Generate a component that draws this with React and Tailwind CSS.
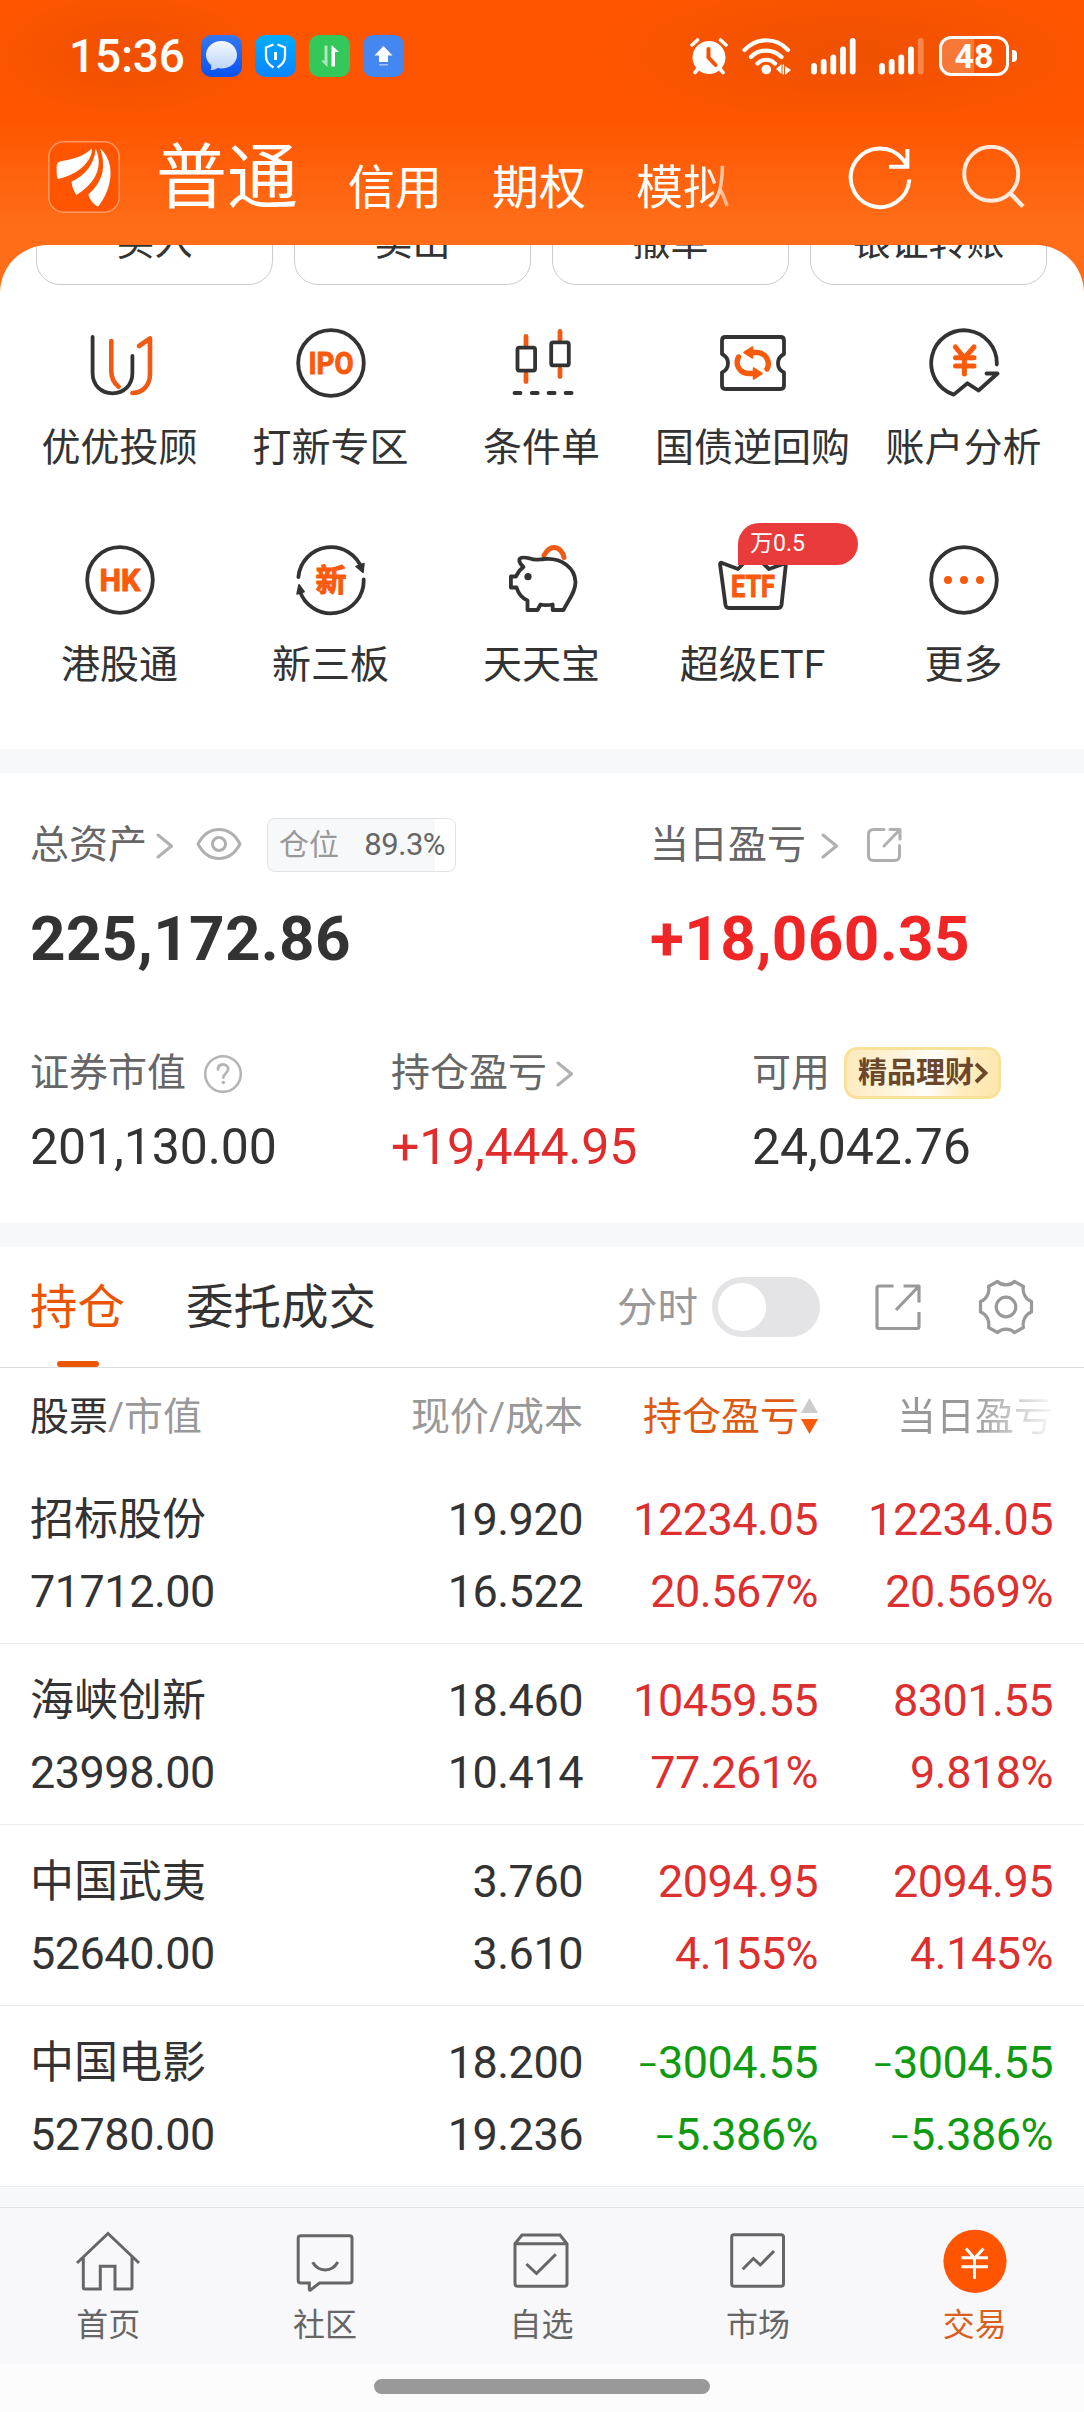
import { useState } from 'react';

const HOLDINGS = [
  { name: '招标股份', value: '71712.00', price: '19.920', cost: '16.522', total: '12234.05', totalPct: '20.567%', day: '12234.05', dayPct: '20.569%' },
  { name: '海峡创新', value: '23998.00', price: '18.460', cost: '10.414', total: '10459.55', totalPct: '77.261%', day: '8301.55', dayPct: '9.818%' },
  { name: '中国武夷', value: '52640.00', price: '3.760', cost: '3.610', total: '2094.95', totalPct: '4.155%', day: '2094.95', dayPct: '4.145%' },
  { name: '中国电影', value: '52780.00', price: '18.200', cost: '19.236', total: '-3004.55', totalPct: '-5.386%', day: '-3004.55', dayPct: '-5.386%' },
];

const GridIcon = ({ children }) => (
  <svg className="h-[72px] w-[72px] shrink-0" viewBox="0 0 72 72" fill="none" stroke="#333" strokeWidth="3.8" strokeLinecap="round" strokeLinejoin="round">
    {children}
  </svg>
);

const IconText = ({ y, width, size = 31, children }) => (
  <text x={36 - width / 2} y={y} textLength={width} lengthAdjust="spacingAndGlyphs" fontSize={size} fontWeight="700" fill="#f95a0c" stroke="#f95a0c" strokeWidth="1">
    {children}
  </text>
);

const SERVICES = [
  {
    label: '优优投顾',
    icon: (
      <GridIcon>
        <path d="M8.6 10V46C8.6 58 17 66.3 28.5 66.3S48.4 58 48.4 46V29" />
        <path stroke="#f05a14" strokeWidth="4.6" d="M27.3 14V44C27.3 51 30 56 34.6 59.7M55 19L66 11.5V47C66 58 59 66 48.4 66" />
      </GridIcon>
    ),
  },
  {
    label: '打新专区',
    icon: (
      <GridIcon>
        <circle cx="36" cy="36" r="32.8" />
        <IconText y={47} width={45}>IPO</IconText>
      </GridIcon>
    ),
  },
  {
    label: '条件单',
    icon: (
      <GridIcon>
        <path stroke="#f05a14" strokeWidth="4.8" d="M20 9.5V18M20 47V54.5M54 4.5V13M54 42V49.5" />
        <rect x="11.5" y="20.6" width="17.6" height="23" rx="2" />
        <rect x="45.2" y="15.4" width="17.6" height="23" rx="2" />
        <path d="M8.5 66H14.5M25.7 66H31.7M42.6 66H48.6M59.6 66H65.6" />
      </GridIcon>
    ),
  },
  {
    label: '国债逆回购',
    icon: (
      <GridIcon>
        <path d="M8.5 10H63.5Q67 10 67 13.5V27C59 31 59 41.5 67 45.5V58.5Q67 62 63.5 62H8.5Q5 62 5 58.5V45.5C13 41.5 13 31 5 27V13.5Q5 10 8.5 10Z" />
        <path stroke="#f95a0c" strokeWidth="5.4" d="M33 25.5H40C48 25.5 54 34 50 42M39 46.5H32C23 46.5 17.5 38 21.5 30" />
        <path fill="#f95a0c" stroke="#f95a0c" strokeWidth="1.5" d="M27 25.5L35.5 20V31ZM45 46.5L36.5 41V52Z" />
      </GridIcon>
    ),
  },
  {
    label: '账户分析',
    icon: (
      <GridIcon>
        <path d="M68.8 37.5A32.8 33 0 1 0 25.7 67.6L39.5 56.3L50.5 63.5L69.5 46.5H58.5" />
        <path stroke="#f95a0c" strokeWidth="5" d="M27.4 20L36.4 31L46 20M36.4 31V47M27.5 30.8H46M27.5 39H46" />
      </GridIcon>
    ),
  },
  {
    label: '港股通',
    icon: (
      <GridIcon>
        <circle cx="36" cy="36" r="32.8" />
        <IconText y={47} width={41}>HK</IconText>
      </GridIcon>
    ),
  },
  {
    label: '新三板',
    icon: (
      <GridIcon>
        <path d="M3.4 33A32.8 32.8 0 0 1 67 25M68.7 35.5A32.8 32.8 0 0 1 4.5 46" />
        <path fill="#333" strokeWidth="1.5" d="M61 22.5L69 19.5L68 28.5ZM2 50L9.2 47.7L4 40.7Z" />
        <IconText y={47} width={31}>新</IconText>
      </GridIcon>
    ),
  },
  {
    label: '天天宝',
    icon: (
      <GridIcon>
        <path stroke="#f05a14" strokeWidth="5" d="M38 11.5C41 6 44.5 3.5 48 3.5C53 3.5 57 8 58 13.5" />
        <path d="M17.5 23C13.5 19.5 12.5 16 14 14.5C16.5 12.5 20 13.5 24 14.5C29 16.5 32 15.5 38 15C56 13.5 69 24 69.5 38C69.5 49 62 56 57.5 66H46.7V60.5C42 61.3 38 61.3 34.5 60.5L31.5 66H21.5V56.5C17 54.5 12.5 50 10.5 43.5H4.9V32.5H10C11.5 29 14 25.5 17.5 23Z" />
        <circle cx="22" cy="32.7" r="3.6" fill="#333" stroke="none" />
      </GridIcon>
    ),
  },
  {
    label: '超级ETF',
    tag: '万0.5',
    icon: (
      <GridIcon>
        <path d="M5 19L21 25L36 10L52 25L69 19L64.5 61Q64 64 61 64H12Q9 64 8.5 61L3 20Q3.5 18 5 19Z" />
        <IconText y={53} width={44}>ETF</IconText>
      </GridIcon>
    ),
  },
  {
    label: '更多',
    icon: (
      <GridIcon>
        <circle cx="36" cy="36" r="32.8" />
        <g fill="#f95a0c" stroke="none">
          <circle cx="20" cy="36" r="4" />
          <circle cx="36" cy="36" r="4" />
          <circle cx="52" cy="36" r="4" />
        </g>
      </GridIcon>
    ),
  },
];

const NAV = [
  {
    label: '首页',
    icon: <path d="M2 35L33 5.5L64 35M8.3 29V59.5Q8.3 61 10 61H25.3V38.3H40V61H55.5Q57 61 57 59.5V29" />,
  },
  {
    label: '社区',
    icon: <path d="M9 7.7H57.5Q60 7.7 60 10V52.5Q60 55 57.5 55H27.5L18.5 62Q17.3 62.5 17.3 61V55H9Q6.2 55 6.2 52.5V10Q6.2 7.7 9 7.7ZM20.7 34.3C26.5 44.5 40 44.5 45.8 34" />,
  },
  {
    label: '自选',
    icon: <path d="M7 15.7L14 7H52L59 15.7V55.5Q59 58.2 56.5 58.2H9.5Q7 58.2 7 55.5ZM7 15.7H59M18.4 36L28.5 45.5L47.8 26.3" />,
  },
  {
    label: '市场',
    icon: <path d="M9 6.8H56Q58.5 6.8 58.5 9V55.7Q58.5 58.2 56 58.2H9Q6.7 58.2 6.7 55.7V9Q6.7 6.8 9 6.8ZM17.7 41.3L28.4 30.5L35.3 37L49 23" />,
  },
  {
    label: '交易',
    active: true,
    icon: (
      <>
        <circle cx="33" cy="33.3" r="31.6" fill="#ff5500" stroke="none" />
        <path stroke="#fff" d="M24 20.5L32.5 30.3L41.5 20.5M32.5 30V51M19.4 29.8H46M19.4 38.8H46" />
      </>
    ),
  },
];

const Chevron = ({ className }) => (
  <svg className={`h-[26px] w-[18px] shrink-0 ${className}`} viewBox="0 0 18 26" fill="none" stroke="#b0b0b0" strokeWidth="3" strokeLinecap="round" strokeLinejoin="round">
    <path d="M2 2L15.5 13L2 24" />
  </svg>
);

function StatusBar() {
  return (
    <div className="flex h-[112px] items-center bg-[radial-gradient(ellipse_150px_70px_at_127px_54px,rgba(120,50,0,0.13),transparent),radial-gradient(ellipse_260px_80px_at_850px_54px,rgba(120,50,0,0.13),transparent)] pl-[69px] text-white">
      <span className="w-[132px] text-[46px] font-medium leading-[60px] tracking-[-0.2px]">15:36</span>
      <div className="flex gap-[13px]">
        <svg className="h-[42px] w-[41px]" viewBox="0 0 41 42">
          <defs>
            <linearGradient id="msg" x1="0" y1="0" x2="0" y2="1">
              <stop offset="0" stopColor="#3578f0" />
              <stop offset="1" stopColor="#0a52f0" />
            </linearGradient>
            <linearGradient id="bubble" x1="0" y1="0" x2="0" y2="1">
              <stop offset="0" stopColor="#f4f9ff" />
              <stop offset="1" stopColor="#bcd3fb" />
            </linearGradient>
          </defs>
          <rect width="41" height="42" rx="10" fill="url(#msg)" />
          <path fill="url(#bubble)" d="M20.5 6C29 6 36 12 36 20S29 33.5 20.5 33.5C19 33.5 17.5 33.3 16.5 33C14.5 34.5 12.5 35 9.5 35C10.5 33.5 10.5 32 10 30C7 27.5 5 24 5 20C5 12 12 6 20.5 6Z" />
        </svg>
        <svg className="h-[42px] w-[41px]" viewBox="0 0 41 42" fill="none" stroke="#fff" strokeWidth="2.2">
          <defs>
            <linearGradient id="guard" x1="0" y1="0" x2="0" y2="1">
              <stop offset="0" stopColor="#00adff" />
              <stop offset="1" stopColor="#0a84ff" />
            </linearGradient>
          </defs>
          <rect width="41" height="42" rx="10" fill="url(#guard)" stroke="none" />
          <path d="M18.5 9.5L11 12.5V21C11 26.5 14 30 18.5 32.5M22.5 9.5L30 12.5V21C30 26.5 27 30 22.5 32.5" />
          <path strokeWidth="3" d="M20.5 17V25" />
        </svg>
        <svg className="h-[42px] w-[41px]" viewBox="0 0 41 42">
          <rect width="41" height="42" rx="10" fill="#34c759" />
          <path fill="#fff" opacity=".6" d="M15.5 10.5H18.5V32L12 25.5H15.5Z" />
          <path fill="#fff" d="M22.5 10L30 17H26V31.5H22.5Z" />
        </svg>
        <svg className="h-[42px] w-[41px]" viewBox="0 0 41 42">
          <rect width="41" height="42" rx="10" fill="#4487f0" />
          <path fill="#fff" d="M20.5 11L29.5 20.5H25V27H16V20.5H11.5Z" />
          <path fill="#fff" opacity=".5" d="M16 29H25V30.5H16Z" />
        </svg>
      </div>
      <div className="ml-[285px] flex items-center">
        <svg className="h-[38px] w-[40px]" viewBox="0 0 40 38" fill="none" stroke="#fff" strokeLinecap="round">
          <circle cx="20" cy="20.5" r="16.5" fill="#fff" stroke="none" />
          <path strokeWidth="3.6" d="M3 8L8.5 3M37 8L31.5 3M6 35.5L9 32M34 35.5L31 32" />
          <path stroke="#f55200" strokeWidth="4" strokeLinejoin="round" d="M19.5 12V20.5L26.5 28" />
        </svg>
        <svg className="ml-[13px] h-[38px] w-[50px]" viewBox="0 0 50 38" fill="none" stroke="#fff" strokeWidth="4.2" strokeLinecap="round">
          <path d="M2.5 13C14.5 0 34 0 46 13M9 20C17 11.5 31 11.5 39.5 20M15.5 26.5C20.5 21.5 28 21.5 33 26.5" />
          <circle cx="24.3" cy="32.5" r="4.8" fill="#fff" stroke="none" />
          <path fill="#fff" stroke="none" d="M34 32L39.5 27V37ZM49 33L43 38V29Z" />
          <path strokeWidth="1.5" d="M41.3 28V37" />
        </svg>
        <svg className="ml-[18px] h-[38px] w-[48px]" viewBox="0 0 48 38" fill="none" stroke="#fff" strokeWidth="5.8" strokeLinecap="round">
          <path d="M4 29V34.5M13.7 25V34.5M23.3 20.5V34.5M33 12.5V34.5M42.7 4V34.5" />
        </svg>
        <svg className="ml-[20px] h-[38px] w-[48px]" viewBox="0 0 48 38" fill="none" stroke="#fff" strokeWidth="5.8" strokeLinecap="round">
          <path d="M4 29V34.5M13.7 25V34.5M23.3 20.5V34.5M33 12.5V34.5" />
          <path opacity=".3" d="M42.7 4V34.5" />
        </svg>
        <div className="ml-[13px] flex h-[40px] w-[70px] items-center justify-center rounded-[12px] border-[3px] border-white bg-[linear-gradient(90deg,rgba(255,255,255,0.22)_50%,transparent_50%)] text-[34px] font-bold leading-none">48</div>
        <div className="ml-[3px] h-[12px] w-[5px] rounded-r-[4px] bg-white" />
      </div>
    </div>
  );
}

function Header() {
  return (
    <div className="h-[245px]">
      <StatusBar />
      <div className="flex h-[133px] items-start text-white">
        <svg className="ml-[48px] mt-[29px] h-[72px] w-[72px]" viewBox="0 0 72 72">
          <rect x=".8" y=".8" width="70.4" height="70.4" rx="15" fill="#ff5500" stroke="#ff9a66" strokeWidth="1.5" />
          <g fill="#fff">
            <path d="M8.7 25C9 21.5 11 20.5 14 20C26 18.5 37 14 44 7.5C44.5 20 30 34 9.6 38C8.5 34 8.5 29 8.7 25Z" />
            <path d="M47.6 7.5C47 22 38 34 23.4 40.7C24 46 26 50 28.2 54C44 45 57 28 47.6 7.5Z" />
            <path d="M52 7.5C60 14 63 24 62.5 34C62 46 57 57 50 65.7C45 63 42 59 40.3 53.5C54 42 59 26 52 7.5Z" />
          </g>
        </svg>
        <span className="ml-[36px] mt-[14px] text-[71px] leading-[104px]">普通</span>
        <div className="ml-[50px] mt-[41px] flex w-[421px] gap-[50px] text-[47px] leading-[70px]">
          <span>信用</span>
          <span>期权</span>
          <span className="bg-[linear-gradient(90deg,#fff_76%,#ff9a60_102%)] bg-clip-text text-transparent">模拟</span>
        </div>
        <svg className="ml-[78px] mt-[33px] h-[66px] w-[66px]" viewBox="0 0 66 66" fill="none" stroke="#fff" strokeWidth="4">
          <path d="M62.3 34.5A29.3 29.3 0 1 1 56 14.5L61 22M42 21.7H60.4V4" />
        </svg>
        <svg className="ml-[46px] mt-[33px] h-[66px] w-[66px]" viewBox="0 0 66 66" fill="none" stroke="#ffeade" strokeWidth="4">
          <circle cx="32.2" cy="28.8" r="27" />
          <path strokeWidth="4.5" d="M50.5 47.5L64 61.5" />
        </svg>
      </div>
    </div>
  );
}

function Services() {
  return (
    <>
      <div className="flex h-[40px] items-end gap-[21px] overflow-hidden px-[36px]">
        {['买入', '卖出', '撤单', '银证转账'].map((label) => (
          <div key={label} className="flex h-[92px] w-[237px] shrink-0 items-center justify-center rounded-[24px] border border-[#ccc] pt-[6px] text-[38px]">
            {label}
          </div>
        ))}
      </div>
      <div className="grid h-[464px] grid-cols-5 content-start pl-[14px] pr-[15px] pt-[42px]">
        {SERVICES.map((item) => (
          <div key={item.label} className="relative flex h-[217px] flex-col items-center">
            {item.icon}
            {item.tag && (
              <span className="absolute left-[91px] top-[-21px] h-[42px] w-[120px] rounded-[21px] rounded-bl-none bg-[#ea3b3c] pl-[12px] text-[23px] leading-[42px] text-white">
                {item.tag}
              </span>
            )}
            <span className="mt-[21px] whitespace-nowrap text-[39px] leading-[56px]">{item.label}</span>
          </div>
        ))}
      </div>
    </>
  );
}

function Assets() {
  return (
    <div className="h-[450px] text-[39px] leading-[56px] text-[#666]">
      <div className="flex pl-[30px] pt-[44px]">
        <div className="w-[620px]">
          <div className="flex h-[56px] items-center">
            总资产
            <Chevron className="ml-[9px] mt-[1px]" />
            <svg className="mb-[2px] ml-[22px] h-[34px] w-[46px]" viewBox="0 0 46 34" fill="none" stroke="#b0b0b0" strokeWidth="3">
              <path strokeLinejoin="round" d="M2 17C7 7.5 14 2.5 23 2.5S39 7.5 44 17C39 26.5 32 31.5 23 31.5S7 26.5 2 17Z" />
              <circle cx="23" cy="17" r="6.5" />
            </svg>
            <div className="ml-[25px] flex h-[54px] w-[189px] items-center justify-between overflow-hidden rounded-[8px] border border-[#e2e2e4] bg-[linear-gradient(90deg,#f7f8fa_89.3%,#fff_89.3%)] pl-[11px] pr-[10px] text-[30px]">
              <span className="text-[#999]">仓位</span>
              <span className="text-[31px] tracking-[-0.5px]">89.3%</span>
            </div>
          </div>
          <div className="mt-[30px] text-[62px] font-bold leading-[72px] tracking-[0.3px] text-[#333]">225,172.86</div>
        </div>
        <div>
          <div className="flex h-[56px] items-center">
            当日盈亏
            <Chevron className="ml-[15px] mt-[1px]" />
            <svg className="ml-[27px] h-[36px] w-[36px]" viewBox="0 0 36 36" fill="none" stroke="#b0b0b0" strokeWidth="3" strokeLinecap="round" strokeLinejoin="round">
              <path d="M18 2.5H7.5Q2.5 2.5 2.5 7.5V28.5Q2.5 33.5 7.5 33.5H28.5Q33.5 33.5 33.5 28.5V18.5M24 2.5H34V12M34 2.5L18 19" />
            </svg>
          </div>
          <div className="mt-[30px] text-[62px] font-bold leading-[72px] tracking-[0.4px] text-[#f02626]">+18,060.35</div>
        </div>
      </div>
      <div className="flex pl-[30px] pt-[70px]">
        <div className="w-[361px]">
          <div className="flex h-[56px] items-center">
            证券市值
            <svg className="ml-[17px] mt-[1px] h-[40px] w-[40px]" viewBox="0 0 40 40" fill="none" stroke="#b5b5b5" strokeWidth="2.6" strokeLinecap="round">
              <circle cx="20" cy="20" r="17.8" />
              <path strokeWidth="2.8" d="M15 15.5C15 12 17.3 10.5 20 10.5S25.2 12.3 25.2 15.3C25.2 18.5 20.5 19.5 20.3 23.5" />
              <circle cx="20.3" cy="28.5" r="1.8" fill="#b5b5b5" stroke="none" />
            </svg>
          </div>
          <div className="mt-[16px] text-[50px] leading-[60px] tracking-[-0.1px] text-[#333]">201,130.00</div>
        </div>
        <div className="w-[361px]">
          <div className="flex h-[56px] items-center">
            持仓盈亏
            <Chevron className="ml-[9px] mt-[1px]" />
          </div>
          <div className="mt-[16px] text-[50px] leading-[60px] tracking-[-0.2px] text-[#e02c2c]">+19,444.95</div>
        </div>
        <div>
          <div className="flex h-[56px] items-center">
            可用
            <div className="ml-[14px] flex h-[52px] w-[157px] items-center rounded-[13px] border-[3px] border-[#f8e29a] bg-[linear-gradient(105deg,#fdebc0_5%,#fef3d8_30%,#fffefa_55%,#feecbd_78%,#fde6ae)] pl-[11px] text-[29px] font-bold text-[#6b482c]">
              精品理财
              <svg className="h-[22px] w-[15px]" viewBox="0 0 15 22" fill="none" stroke="#6b482c" strokeWidth="3.8">
                <path d="M2 2L11.5 11L2 20" />
              </svg>
            </div>
          </div>
          <div className="mt-[16px] text-[50px] leading-[60px] tracking-[-0.1px] text-[#333]">24,042.76</div>
        </div>
      </div>
    </div>
  );
}

function HoldingTabs() {
  const [timeline, setTimeline] = useState(false);

  return (
    <div className="flex h-[121px] items-center border-b border-[#dedede] pl-[30px] text-[47.5px] leading-[68px]">
      <div className="flex h-[120px] w-[95px] flex-col items-center justify-between text-[#ea5504]">
        <span className="pt-[27px]">持仓</span>
        <span className="h-[6px] w-[42px] rounded-full bg-[#ea5504]" />
      </div>
      <span className="ml-[61px] w-[431px] pt-[2px]">委托成交</span>
      <span className="pt-[2px] text-[40.5px] text-[#999]">分时</span>
      <button
        onClick={() => setTimeline(!timeline)}
        className={`ml-[14px] flex h-[60px] w-[108px] items-center rounded-full px-[6px] ${timeline ? 'justify-end bg-[#ea5504]' : 'bg-[#e4e4e6]'}`}
      >
        <span className="h-[48px] w-[48px] rounded-full bg-white" />
      </button>
      <svg className="ml-[54px] h-[48px] w-[48px]" viewBox="0 0 48 48" fill="none" stroke="#999" strokeWidth="3.2" strokeLinejoin="round">
        <path d="M19.5 3H5Q3 3 3 5V43.5Q3 45.5 5 45.5H43Q45 45.5 45 43.5V29M29.5 3H45V19.5M45 3L22 27" />
      </svg>
      <svg className="ml-[56px] h-[56px] w-[56px]" viewBox="0 0 56 56" fill="none" stroke="#999" strokeWidth="3.2" strokeLinejoin="round">
        <path d="M19.5 2.5C24 7 32 7 36.5 2.5L45.5 7.5C44 13.5 47.5 20.5 53.5 22.5V33C47.5 35 44 42 45.5 48.5L36.5 53.5C32 49 24 49 19.5 53.5L10.5 48.5C12 42 8.5 35 2.5 33V22.5C8.5 20.5 12 13.5 10.5 7.5Z" />
        <circle cx="28" cy="28" r="9.8" />
      </svg>
    </div>
  );
}

// short dash in front of losses, lighter than the font's own minus sign
function Amount({ value }) {
  if (!value.startsWith('-')) return <div className="h-[72px]">{value}</div>;
  return (
    <div className="h-[72px]">
      <span className="text-[37px] leading-none">−</span>
      {value.slice(1)}
    </div>
  );
}

function Cell({ top, bottom, className = '' }) {
  return (
    <div className={`text-right ${className}`}>
      <Amount value={top} />
      <Amount value={bottom} />
    </div>
  );
}

function HoldingTable() {
  const getColor = (value) => (value.startsWith('-') ? 'text-[#0f9a12]' : 'text-[#dc2f2f]');

  return (
    <div>
      <div className="grid h-[95px] grid-cols-[301px_252px_235px_235px] items-center pl-[30px] pt-[3px] text-[39px] leading-[56px] text-[#999]">
        <div>
          <span className="text-[#333]">股票</span>/市值
        </div>
        <div className="text-right">现价/成本</div>
        <div className="flex items-center justify-end text-[#dd5a14]">
          持仓盈亏
          <svg className="mb-[2px] ml-[2px] h-[36px] w-[17px]" viewBox="0 0 17 36">
            <path fill="#ccc" d="M8.5 0L17 15H0Z" />
            <path fill="#f95a0c" d="M8.5 36L17 21H0Z" />
          </svg>
        </div>
        <div className="text-right">
          <span className="bg-[linear-gradient(90deg,#999_48%,#fff_104%)] bg-clip-text text-transparent">当日盈亏</span>
        </div>
      </div>
      {HOLDINGS.map((row) => (
        <div key={row.name} className="grid h-[181px] grid-cols-[301px_252px_235px_235px] border-b border-[#ebebeb] pl-[30px] pt-[21px] text-[45px] leading-[72px] tracking-[-0.5px]">
          <div>
            <div className="text-[44px] tracking-normal">{row.name}</div>
            <div>{row.value}</div>
          </div>
          <Cell top={row.price} bottom={row.cost} />
          <Cell top={row.total} bottom={row.totalPct} className={getColor(row.total)} />
          <Cell top={row.day} bottom={row.dayPct} className={getColor(row.day)} />
        </div>
      ))}
    </div>
  );
}

function BottomNav() {
  return (
    <>
      <div className="grid h-[157px] grid-cols-5 border-t border-[#e0e1e3] bg-[#f8f8fa] pr-[1px]">
        {NAV.map((item) => (
          <div key={item.label} className={`flex flex-col items-center pt-[20px] text-[32px] leading-[44px] ${item.active ? 'text-[#d9601f]' : 'text-[#666]'}`}>
            <svg className="h-[66px] w-[66px]" viewBox="0 0 66 66" fill="none" stroke="#666" strokeWidth="3">
              {item.icon}
            </svg>
            <span className="mt-[9px]">{item.label}</span>
          </div>
        ))}
      </div>
      <div className="flex h-[48px] justify-center bg-[#fcfcfc] pt-[15px]">
        <div className="h-[15px] w-[336px] rounded-full bg-[#999]" />
      </div>
    </>
  );
}

export default function App() {
  return (
    <div className="h-[2412px] w-[1084px] overflow-hidden bg-white font-['Roboto','Noto_Sans_CJK_SC',sans-serif] text-[#333]">
      <div className="bg-[linear-gradient(180deg,#ff5500_0px,#ff5500_120px,#ff6d18_225px,#ff6d18_100%)]">
        <Header />
        <div className="overflow-hidden rounded-t-[48px] bg-white">
          <Services />
        </div>
      </div>
      <div className="h-[24px] bg-[#f7f8fa]" />
      <Assets />
      <div className="h-[24px] bg-[#f7f8fa]" />
      <HoldingTabs />
      <HoldingTable />
      <div className="h-[20px] bg-[#f7f8fa]" />
      <BottomNav />
    </div>
  );
}
